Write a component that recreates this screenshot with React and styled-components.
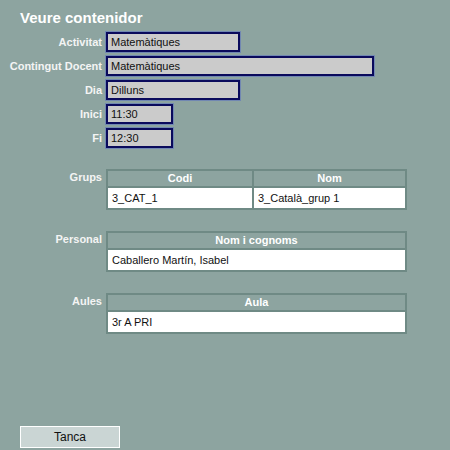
import React from "react";
import styled, { createGlobalStyle } from "styled-components";

const GlobalStyle = createGlobalStyle`
  html, body {
    margin: 0;
    padding: 0;
    background-color: #8da4a0;
  }
  body {
    font-family: "Liberation Sans", Arial, sans-serif;
  }
`;

const StyledPage = styled.div`
  display: flex;
  flex-direction: column;
  width: 450px;
  height: 450px;
  box-sizing: border-box;
  background-color: #8da4a0;
  padding-top: 10px;
`;

const StyledTitle = styled.h1`
  margin: 0 0 6px 20px;
  font-size: 15px;
  line-height: 16px;
  font-weight: bold;
  color: #fff;
`;

const StyledForm = styled.div`
  display: grid;
  grid-template-columns: 102px auto;
  column-gap: 4px;
  row-gap: 4px;
  align-items: center;
`;

const StyledLabel = styled.label`
  text-align: right;
  font-size: 11px;
  font-weight: bold;
  color: #f4f4f4;
  white-space: nowrap;
`;

const StyledField = styled.div`
  box-sizing: border-box;
  width: ${(p) => p.$width}px;
  height: 20px;
  line-height: 16px;
  padding-left: 3px;
  background-color: #cbcbcb;
  border: 2px solid #0a0a5c;
  box-shadow: 0 0 0 1px rgba(80, 100, 200, 0.45);
  font-size: 11px;
  color: #111;
`;

const StyledSection = styled.div`
  display: grid;
  grid-template-columns: 102px 301px;
  column-gap: 4px;
  align-items: start;
  margin-top: 21px;
`;

const StyledSectionLabel = styled(StyledLabel)`
  padding-top: 2px;
`;

const StyledTable = styled.table`
  width: 301px;
  table-layout: fixed;
  border-collapse: separate;
  border-spacing: 2px;
  background-color: #6f8a85;
  font-size: 11px;
`;

const StyledCol = styled.col`
  width: ${(p) => (p.$width ? `${p.$width}px` : "auto")};
`;

const StyledHead = styled.th`
  height: 15px;
  padding: 0;
  background-color: #8da4a0;
  color: #fff;
  font-weight: bold;
  text-align: center;
  line-height: 15px;
`;

const StyledCell = styled.td`
  height: 20px;
  padding: 0 0 0 4px;
  background-color: #fff;
  color: #111;
  text-align: left;
  white-space: nowrap;
`;

const StyledFooter = styled.div`
  margin-top: auto;
  padding: 0 0 2px 20px;
`;

const StyledButton = styled.button`
  width: 100px;
  height: 22px;
  padding: 0;
  background-color: #cad5d4;
  border: 1px solid #fff;
  font-family: "Liberation Sans", Arial, sans-serif;
  font-size: 12px;
  color: #111;
`;

const fields = [
  { label: "Activitat", value: "Matemàtiques", width: 134 },
  { label: "Contingut Docent", value: "Matemàtiques", width: 268 },
  { label: "Dia", value: "Dilluns", width: 134 },
  { label: "Inici", value: "11:30", width: 67 },
  { label: "Fi", value: "12:30", width: 67 },
];

const sections = [
  { label: "Grups", headers: ["Codi", "Nom"], cols: [144], row: ["3_CAT_1", "3_Català_grup 1"] },
  { label: "Personal", headers: ["Nom i cognoms"], cols: [], row: ["Caballero Martín, Isabel"] },
  { label: "Aules", headers: ["Aula"], cols: [], row: ["3r A PRI"] },
];

const App = () => {
  return (
    <StyledPage>
      <GlobalStyle />
      <StyledTitle>Veure contenidor</StyledTitle>
      <StyledForm>
        {fields.map((f) => (
          <React.Fragment key={f.label}>
            <StyledLabel>{f.label}</StyledLabel>
            <StyledField $width={f.width}>{f.value}</StyledField>
          </React.Fragment>
        ))}
      </StyledForm>
      {sections.map((s) => (
        <StyledSection key={s.label}>
          <StyledSectionLabel>{s.label}</StyledSectionLabel>
          <StyledTable>
            <colgroup>
              {s.headers.map((h, i) => (
                <StyledCol key={h} $width={s.cols[i]} />
              ))}
            </colgroup>
            <thead>
              <tr>
                {s.headers.map((h) => (
                  <StyledHead key={h}>{h}</StyledHead>
                ))}
              </tr>
            </thead>
            <tbody>
              <tr>
                {s.row.map((c, i) => (
                  <StyledCell key={i}>{c}</StyledCell>
                ))}
              </tr>
            </tbody>
          </StyledTable>
        </StyledSection>
      ))}
      <StyledFooter>
        <StyledButton>Tanca</StyledButton>
      </StyledFooter>
    </StyledPage>
  );
};

export default App;
